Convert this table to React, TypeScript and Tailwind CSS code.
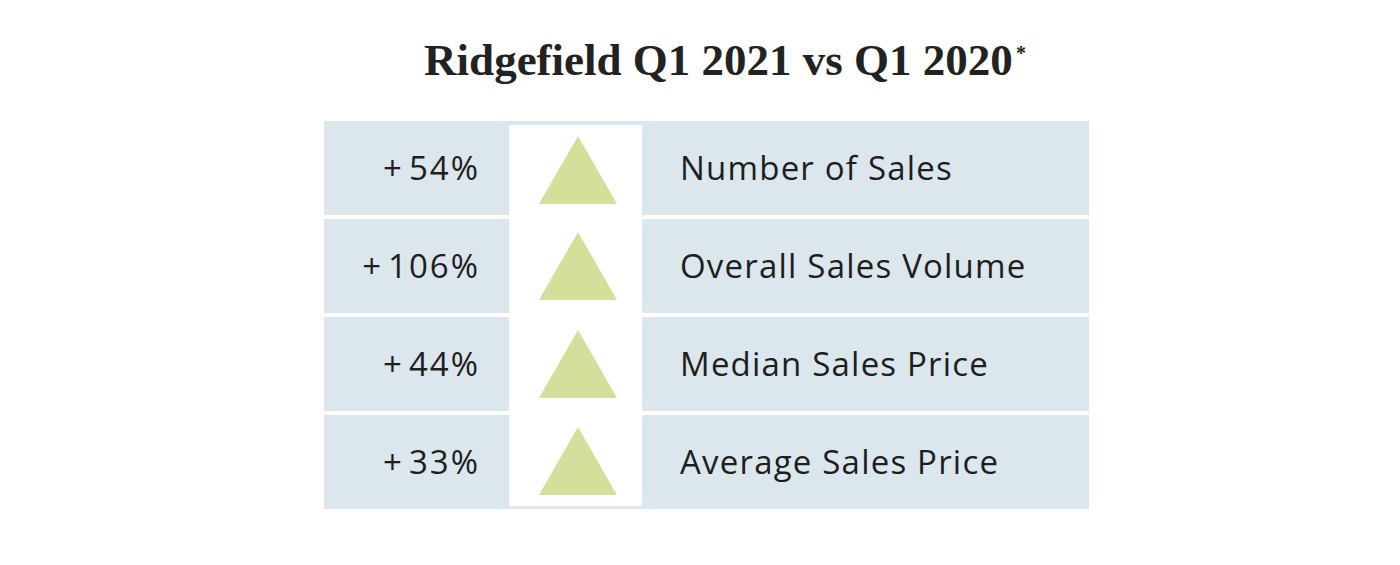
const ROWS = [
  { change: "54%", label: "Number of Sales" },
  { change: "106%", label: "Overall Sales Volume" },
  { change: "44%", label: "Median Sales Price" },
  { change: "33%", label: "Average Sales Price" },
];

function UpTriangle() {
  return (
    <svg width="78" height="68" viewBox="0 0 78 68" aria-hidden="true">
      <polygon points="39,0 78,68 0,68" fill="#d2e09c" />
    </svg>
  );
}

export default function App() {
  return (
    <div className="h-[565px] w-full bg-white font-['Open_Sans',sans-serif] text-[#1e1e1e]">
      <div className="flex justify-center pl-[50px] pt-[38px]">
        <h1 className="flex items-start font-['Liberation_Serif',serif] text-[45px] font-bold leading-none text-[#222]">
          <span>Ridgefield Q1 2021 vs Q1 2020</span>
          <span className="ml-[3px] mt-[5px] text-[20px] leading-none">*</span>
        </h1>
      </div>

      <div className="mt-[38px] flex justify-center pl-[13px]">
        <div className="flex w-[765px] flex-col gap-[4px]">
          {ROWS.map((row, i) => (
            <div key={row.label} className="grid h-[94px] grid-cols-[185px_133px_447px]">
              <div className="flex items-center justify-end bg-[#dce6ed] pr-[29px] text-[33px] tracking-[2px]">
                <span className="mr-[5px]">+</span>
                {row.change}
              </div>
              <div
                className={`flex items-center justify-center bg-white pl-[5px] ${
                  i === 0 ? "border-t-4 border-[#dce6ed]" : ""
                } ${i === ROWS.length - 1 ? "border-b-[3px] border-[#dce6ed]" : ""}`}
              >
                <UpTriangle />
              </div>
              <div className="flex items-center bg-[#dce6ed] pl-[38px] text-[33px] tracking-[1.2px]">
                {row.label}
              </div>
            </div>
          ))}
        </div>
      </div>
    </div>
  );
}
